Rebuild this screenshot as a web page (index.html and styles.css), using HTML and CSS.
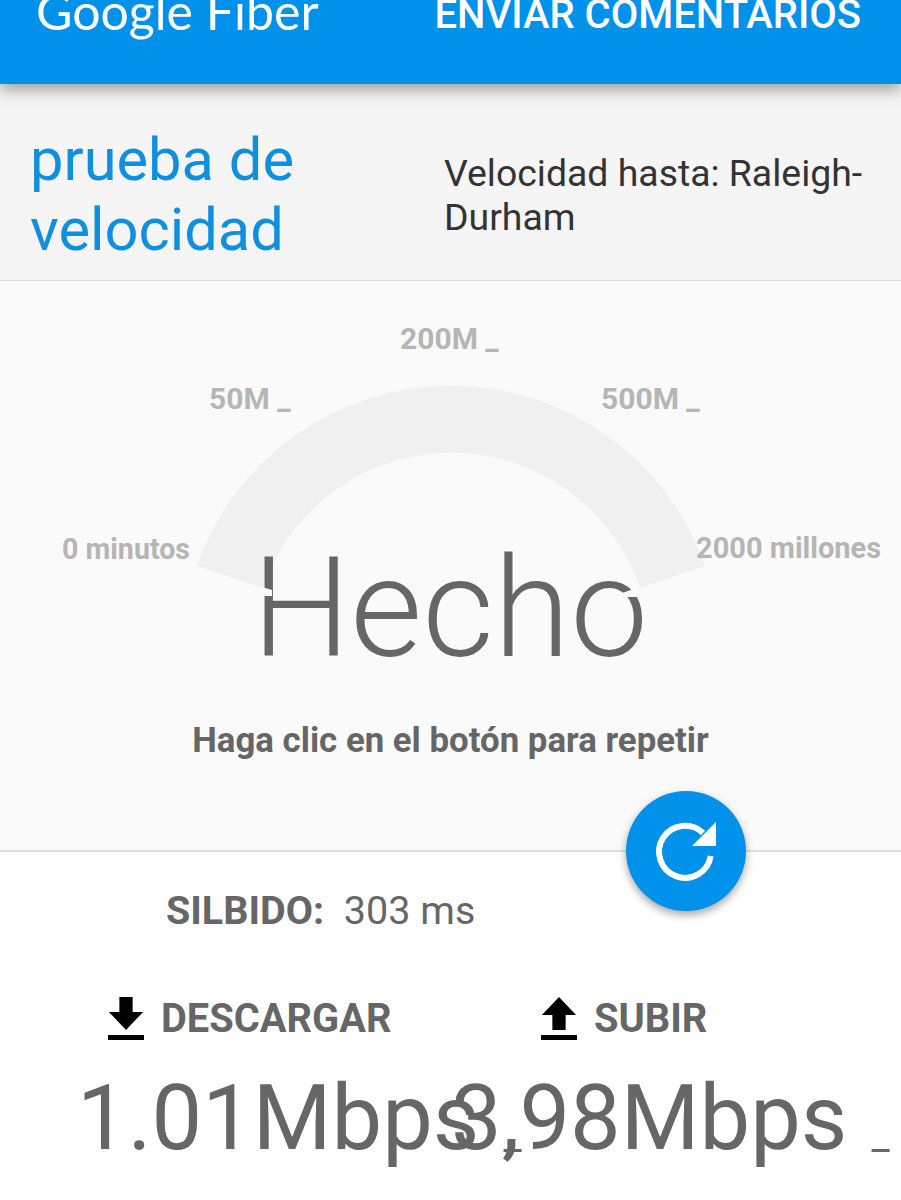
FILE: index.html
```html
<!DOCTYPE html>
<html lang="es">
<head>
  <meta charset="UTF-8">
  <link rel="stylesheet" href="styles.css">
</head>
<body>
  <header class="topbar">
    <span class="logo">Google Fiber</span>
    <span class="feedback">ENVIAR COMENTARIOS</span>
  </header>

  <section class="title-row">
    <h1>prueba de velocidad</h1>
    <p>Velocidad hasta: Raleigh-Durham</p>
  </section>

  <section class="gauge">
    <svg class="arc" width="901" height="570" viewBox="0 0 901 570">
      <path d="M 197 285 A 269 269 0 0 1 705 285 L 640 307 A 199 199 0 0 0 263 307 Z" fill="#f0f0f0"/>
    </svg>
    <span class="tick t0">0 minutos</span>
    <span class="tick big t50">50M _</span>
    <span class="tick big t200">200M _</span>
    <span class="tick big t500">500M _</span>
    <span class="tick t2000">2000 millones</span>
    <div class="status">Hecho</div>
    <svg class="notches" width="901" height="570" viewBox="0 0 901 570">
      <path d="M 258 305 L 272 309 L 272 315 L 258 315 Z" fill="#fafafa"/>
      <path d="M 622 312 L 634 308 L 640 308 L 640 316 L 622 316 Z" fill="#fafafa"/>
    </svg>
    <div class="hint">Haga clic en el botón para repetir</div>
    <button class="fab" type="button">
      <svg width="70" height="70" viewBox="0 0 70 70">
        <path d="M 52 17 A 26 26 0 1 0 59.7 40" fill="none" stroke="#fff" stroke-width="6"/>
        <path d="M 65 6 V 30 H 41 Z" fill="#fff"/>
      </svg>
    </button>
  </section>

  <section class="results">
    <div class="ping"><strong>SILBIDO:</strong> <span>303 ms</span></div>
    <div class="stat-heads">
      <div class="stat-head">
        <svg width="36" height="44" viewBox="0 0 38 44" preserveAspectRatio="none">
          <path d="M 12 0 H 26 V 15 H 37 L 19 33 L 1 15 H 12 Z M 0 38 H 38 V 43 H 0 Z" fill="#000"/>
        </svg>
        DESCARGAR
      </div>
      <div class="stat-head">
        <svg width="36" height="44" viewBox="0 0 38 44" preserveAspectRatio="none">
          <path d="M 19 0 L 37 18 H 26 V 33 H 12 V 18 H 1 Z M 0 38 H 38 V 43 H 0 Z" fill="#000"/>
        </svg>
        SUBIR
      </div>
    </div>
    <div class="stat-values">
      <div>1.01Mbps<small>_</small></div>
      <div>3,98Mbps<small>_</small></div>
    </div>
  </section>
</body>
</html>
```

FILE: styles.css
```css
html, body {
  margin: 0;
  height: 1200px;
  overflow: hidden;
}
body {
  font-family: Roboto, sans-serif;
  background: #fff;
  color: #666;
}
.topbar {
  position: relative;
  z-index: 2;
  height: 84px;
  background: #0091ea;
  color: #fff;
  display: flex;
  justify-content: space-between;
  padding: 0 40px 0 36px;
  box-sizing: border-box;
  box-shadow: 0 6px 14px rgba(0, 0, 0, 0.35);
}
.logo {
  font-family: Lato, sans-serif;
  font-size: 50px;
  line-height: 22px;
}
.feedback {
  font-size: 40px;
  font-weight: 500;
  line-height: 30px;
}
.title-row {
  height: 197px;
  box-sizing: border-box;
  background: #f5f5f5;
  border-bottom: 1px solid #ddd;
  display: flex;
  align-items: center;
  padding: 26px 0 0 30px;
}
.title-row h1 {
  margin: 0;
  width: 414px;
  flex: none;
  font-size: 59.6px;
  font-weight: 400;
  line-height: 70px;
  color: #0f8fe0;
}
.title-row p {
  margin: 0;
  width: 430px;
  font-size: 37.4px;
  line-height: 44px;
  color: #333;
}
.gauge {
  position: relative;
  height: 571px;
  background: #fafafa;
  border-bottom: 2px solid #ddd;
  box-sizing: border-box;
}
.arc, .notches {
  position: absolute;
  left: 0;
  top: 0;
}
.notches {
  z-index: 1;
}
.tick {
  position: absolute;
  font-size: 28.6px;
  font-weight: 700;
  color: #b5b5b5;
  white-space: nowrap;
}
.tick.big {
  font-size: 30px;
}
.t0 { left: 62px; top: 251px; }
.t50 { left: 209px; top: 100px; }
.t200 { left: 400px; top: 40px; }
.t500 { left: 601px; top: 100px; }
.t2000 { left: 696px; top: 250px; font-size: 29px; }
.status {
  position: absolute;
  left: -1px;
  right: 0;
  top: 248px;
  text-align: center;
  font-size: 139px;
  font-weight: 300;
  line-height: 160px;
}
.hint {
  position: absolute;
  left: 0;
  right: 0;
  top: 439px;
  text-align: center;
  font-size: 34.8px;
  font-weight: 700;
}
.fab {
  position: absolute;
  z-index: 2;
  left: 626px;
  top: 510px;
  width: 120px;
  height: 120px;
  padding: 0;
  border: 0;
  border-radius: 50%;
  background: #0091ea;
  box-shadow: 0 4px 8px rgba(0, 0, 0, 0.35);
  display: flex;
  align-items: center;
  justify-content: center;
}
.results {
  padding-top: 35px;
}
.ping {
  padding-left: 166px;
  font-size: 39.5px;
  line-height: 48px;
}
.ping span {
  margin-left: 10px;
}
.stat-heads {
  display: grid;
  grid-template-columns: 433px 300px;
  padding: 60px 0 0 108px;
}
.stat-head {
  display: flex;
  align-items: center;
  gap: 17px;
  font-size: 39.8px;
  font-weight: 700;
}
.stat-values {
  display: grid;
  grid-template-columns: 374px 430px;
  padding: 24px 0 0 77px;
  font-size: 90.2px;
  line-height: 104px;
  white-space: nowrap;
}
.stat-values small {
  font-size: 40px;
  margin-left: 24px;
}
```
